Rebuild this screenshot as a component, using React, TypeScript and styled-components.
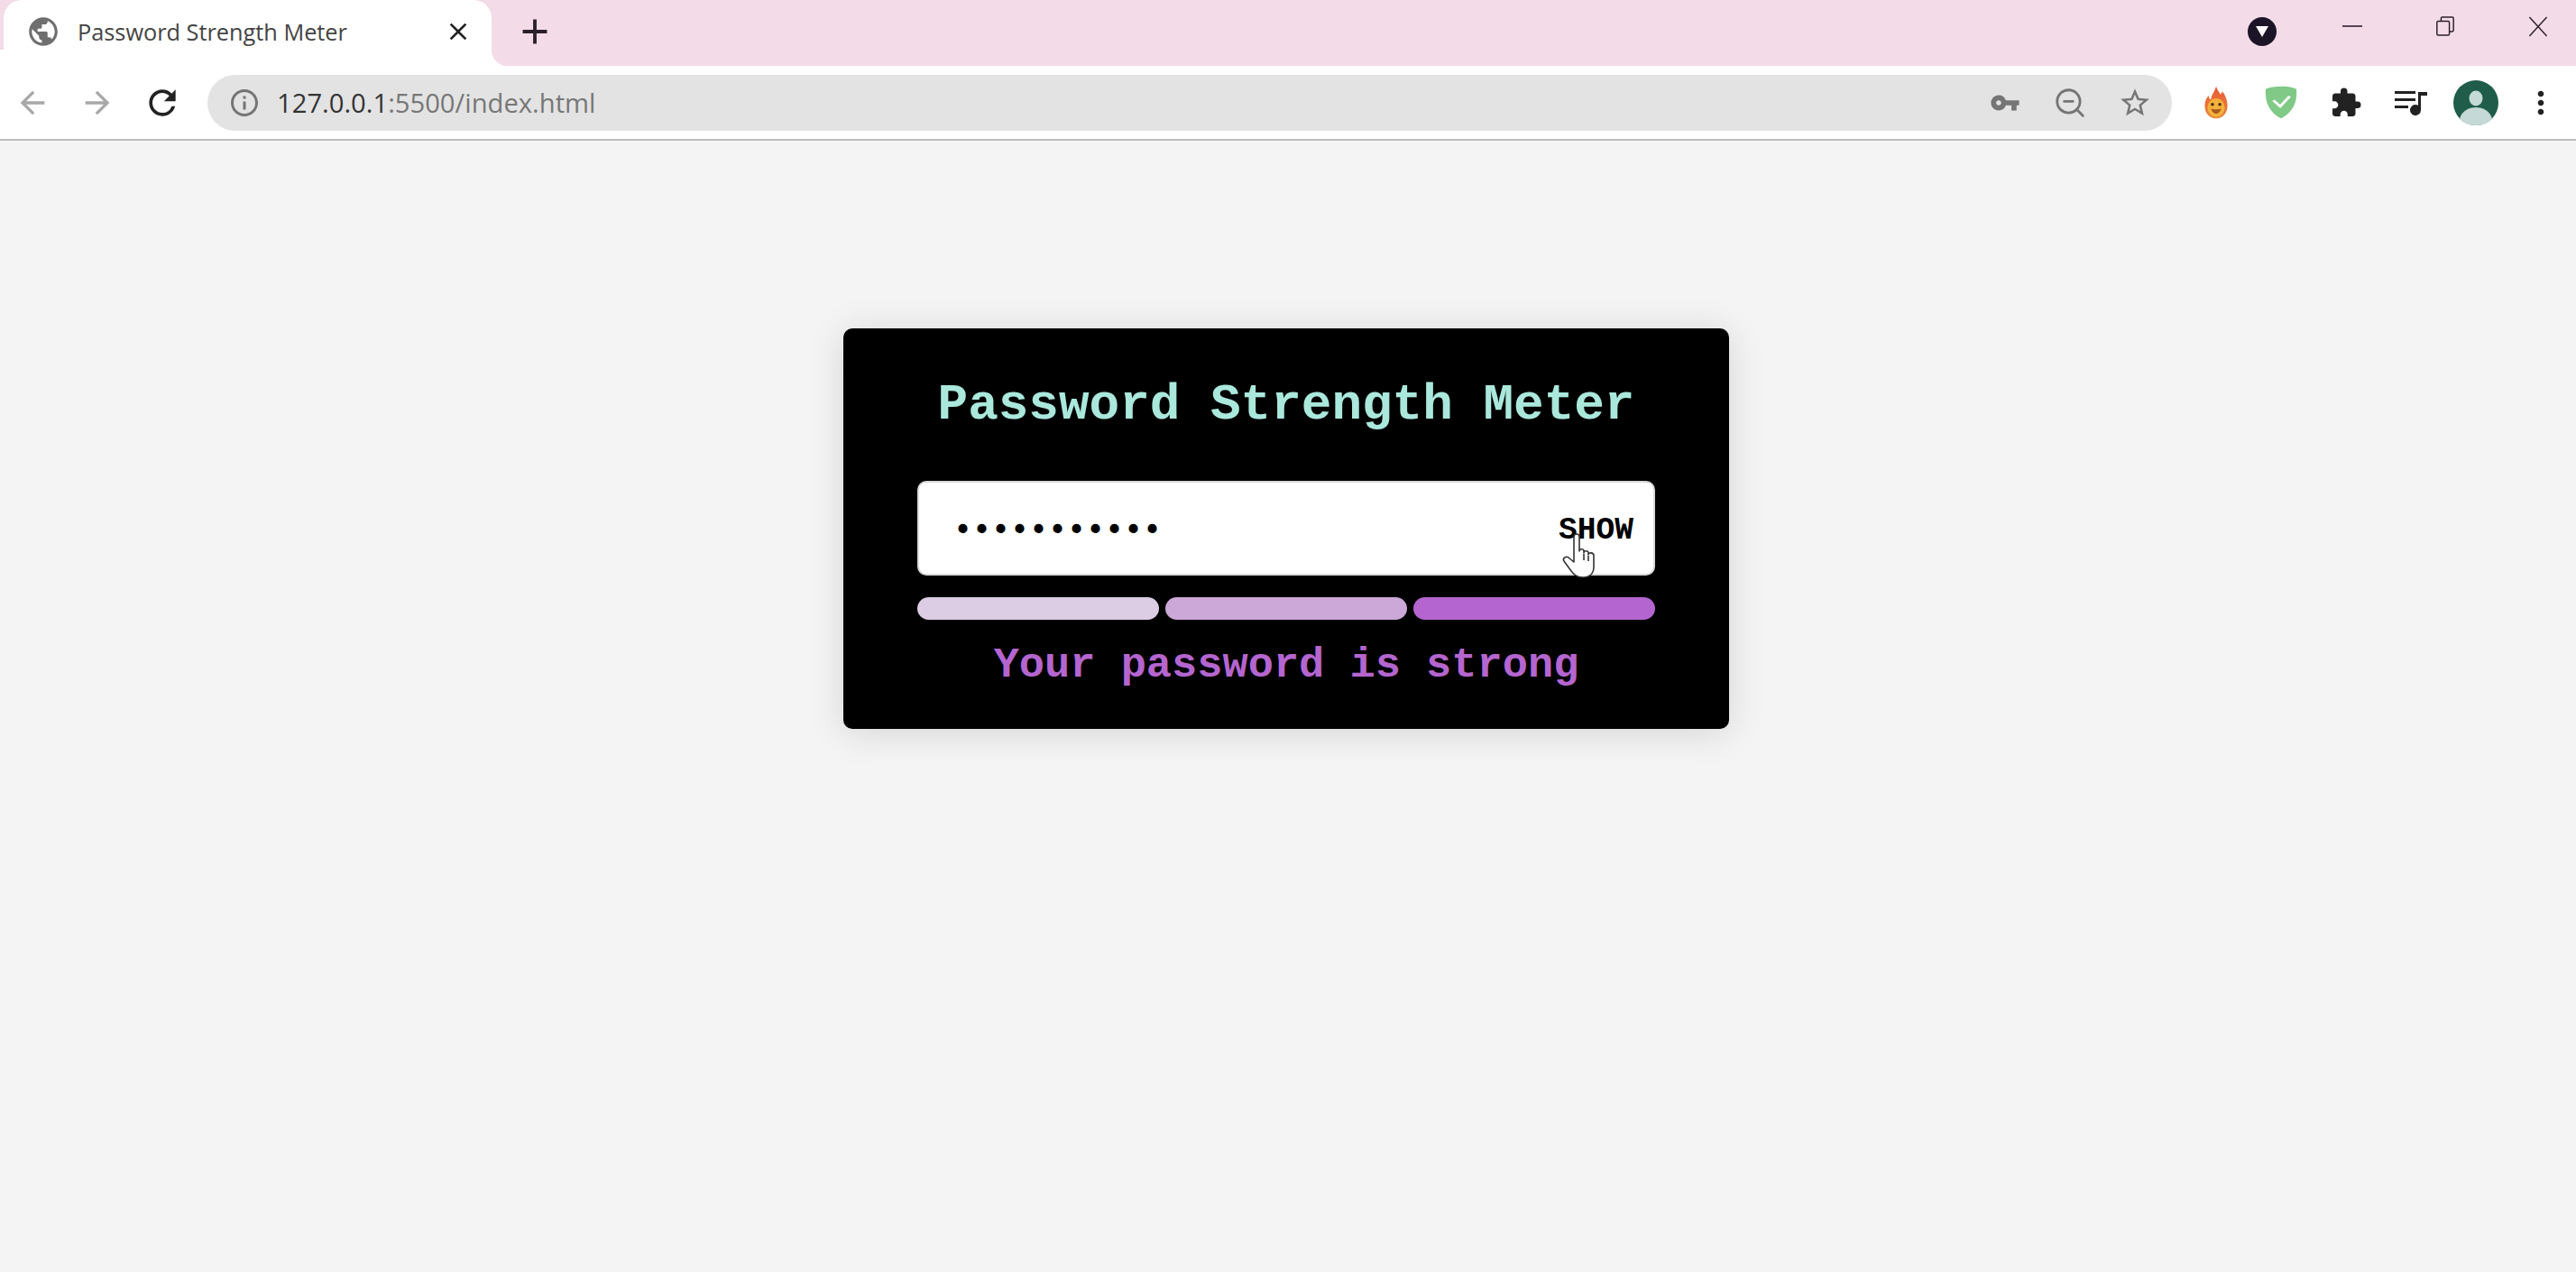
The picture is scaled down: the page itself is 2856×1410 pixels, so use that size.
import React from "react";
import styled, { createGlobalStyle } from "styled-components";
import {
  MdPublic, MdClose, MdAdd, MdArrowBack, MdArrowForward, MdRefresh, MdInfoOutline,
  MdVpnKey, MdStarBorder, MdExtension, MdMoreVert,
} from "react-icons/md";
import { ZoomOut } from "lucide-react";

const Global = createGlobalStyle`
  html, body { margin: 0; padding: 0; background: #f4f4f4; }
  body { width: 2856px; height: 1410px; overflow: hidden; font-family: "Open Sans", sans-serif; }
`;

const Page = styled.div`
  width: 2856px;
  height: 1410px;
  display: flex;
  flex-direction: column;
  background: #f4f4f4;
`;

const TabStrip = styled.header`
  height: 73px;
  flex: none;
  display: flex;
  align-items: center;
  padding-left: 4px;
  background: #f3dbe8;
`;

const Tab = styled.div`
  position: relative;
  align-self: stretch;
  width: 541px;
  display: flex;
  align-items: center;
  gap: 20px;
  padding: 0 21px 3px 28px;
  box-sizing: border-box;
  background: #fff;
  border-radius: 20px 20px 0 0;
  &::after {
    content: "";
    position: absolute;
    left: 100%;
    bottom: 0;
    width: 18px;
    height: 18px;
    background: radial-gradient(circle at top right, transparent 18px, #fff 18.5px);
  }
  &::before {
    content: "";
    position: absolute;
    right: 100%;
    bottom: 0;
    width: 4px;
    height: 18px;
    background: #fff;
  }
`;

const Favicon = styled(MdPublic)`
  flex: none;
  margin: 0 -1px 0 -3px;
  color: #6f6f6f;
`;

const TabTitle = styled.span`
  flex: 1;
  font-size: 25.3px;
  color: #444;
  white-space: nowrap;
`;

const NewTab = styled.div`
  display: flex;
  margin: 0 0 3px 25px;
  color: #2c1f2c;
`;

const Spacer = styled.div`
  flex: 1;
`;

const TabSearch = styled.div`
  width: 32px;
  height: 32px;
  margin-bottom: 3px;
  border-radius: 50%;
  background: #1c1528;
  display: flex;
  align-items: center;
  justify-content: center;
`;

const WindowControls = styled.div`
  display: flex;
  align-items: center;
  gap: 81px;
  margin: 0 31px 15px 73px;
`;

const Toolbar = styled.nav`
  height: 81px;
  flex: none;
  display: flex;
  align-items: center;
  padding-right: 3px;
  background: #fff;
  border-bottom: 2px solid #bdbdbd;
`;

const Slot = styled.div<{ $color?: string }>`
  width: 72px;
  height: 62px;
  flex: none;
  display: flex;
  align-items: center;
  justify-content: center;
  color: ${(p) => p.$color ?? "#222"};
`;

const Omnibox = styled.div`
  flex: 1;
  height: 62px;
  margin: 0 13px 0 14px;
  padding: 0 5px 0 23px;
  display: flex;
  align-items: center;
  background: #e3e3e3;
  border-radius: 31px;
  color: #757575;
`;

const Url = styled.div`
  flex: 1;
  margin-left: 18px;
  font-family: "Open Sans", sans-serif;
  font-size: 29.2px;
  color: #777;
  white-space: nowrap;
`;

const Host = styled.span`
  color: #333;
`;

const Content = styled.main`
  flex: 1;
  display: flex;
  flex-direction: column;
  align-items: center;
  padding: 208px 4px 0 0;
  font-family: "Liberation Mono", "Courier New", monospace;
  font-weight: 700;
`;

const Card = styled.section`
  width: 982px;
  height: 444px;
  box-sizing: border-box;
  padding: 0 82px;
  display: flex;
  flex-direction: column;
  background: #000;
  border-radius: 10px;
  box-shadow: 0 4px 40px rgba(0, 0, 0, 0.13);
`;

const Title = styled.h1`
  margin: 0;
  height: 169px;
  padding-top: 61px;
  box-sizing: border-box;
  font-size: 56px;
  line-height: 48px;
  font-weight: 700;
  text-align: center;
  white-space: nowrap;
  color: #aae8dc;
`;

const Field = styled.div`
  position: relative;
  height: 105px;
  box-sizing: border-box;
  padding: 4px 22px 0 38px;
  display: flex;
  align-items: center;
  justify-content: space-between;
  background: #fff;
  border: 2px solid #d8d8d8;
  border-radius: 10px;
`;

const Dots = styled.span`
  padding-top: 2px;
  font-size: 35px;
  color: #000;
`;

const ShowLabel = styled.span`
  font-size: 34.6px;
  color: #000;
`;

const Meter = styled.div`
  display: grid;
  grid-template-columns: repeat(3, 1fr);
  gap: 7px;
  margin-top: 24px;
`;

const Bar = styled.div<{ $color: string }>`
  height: 25px;
  border-radius: 13px;
  background: ${(p) => p.$color};
`;

const Status = styled.p`
  margin: 26px 0 0;
  font-size: 47px;
  line-height: 50px;
  text-align: center;
  white-space: nowrap;
  color: #b565cf;
`;

const Fire = () => (
  <svg width="30" height="37" viewBox="0 0 36 50">
    <defs>
      <linearGradient id="fl" x1="0" y1="0" x2="0" y2="1">
        <stop offset="0" stopColor="#ea5a34" />
        <stop offset="1" stopColor="#e8843a" />
      </linearGradient>
    </defs>
    <path d="M18 1c2 6 5 8 6 12 2-1 3-3 3-5 5 6 8 14 8 22 0 11-7 19-17 19S1 41 1 30c0-6 2-11 6-15 0 3 1 5 3 6 1-8 6-12 8-20z" fill="url(#fl)" />
    <ellipse cx="18" cy="33" rx="13" ry="14" fill="#f3b03c" />
    <circle cx="12.5" cy="28" r="2.4" fill="#4b2b16" />
    <circle cx="23.5" cy="28" r="2.4" fill="#4b2b16" />
    <path d="M10 34c4 2 12 2 16 0-2 5-5 8-8 8s-6-3-8-8z" fill="#a8571f" />
  </svg>
);

const Shield = () => (
  <svg width="36" height="37" viewBox="0 0 38 50" preserveAspectRatio="none">
    <path d="M19 1c7 0 13 1 18 4 1 18-3 34-18 44C4 39 0 23 1 5c5-3 11-4 18-4z" fill="#80c987" />
    <path d="M10 22l8 9 11-15" fill="none" stroke="#fff" strokeWidth="3.4" />
  </svg>
);

const Queue = () => (
  <svg width="36" height="28" viewBox="0 0 36 28" fill="#222">
    <rect x="0" y="1" width="23" height="3" />
    <rect x="0" y="9" width="23" height="3" />
    <rect x="0" y="17" width="15" height="3" />
    <path d="M26 2h10v4h-7v16a6 6 0 1 1-3-5.2z" />
  </svg>
);

const Avatar = () => (
  <svg width="50" height="50" viewBox="0 0 50 50">
    <circle cx="25" cy="25" r="25" fill="#1f5c4a" />
    <ellipse cx="25" cy="20" rx="7.5" ry="8.5" fill="#c5d9d6" />
    <path d="M7 43c2-9 10-13 18-13s16 4 18 13c-5 5-11 7-18 7S12 48 7 43z" fill="#c5d9d6" />
  </svg>
);

const HandSvg = ({ className }: { className?: string }) => (
  <svg className={className} width="42" height="54" viewBox="0 0 42 52" fill="#fff" stroke="#333" strokeWidth="1.6" strokeLinejoin="round">
    <path d="M14 5c0-4 6-4 6 0v16c0-3 5-3 5 0v2c0-3 5-3 5 0v2c0-3 6-3 6 1v12c0 6-3 12-12 12-7 0-10-3-13-7L3 32c-2-3 2-6 5-4l6 5z" />
    <path d="M25 24v7M30 26v6" fill="none" />
  </svg>
);

const Hand = styled(HandSvg)`
  position: absolute;
  left: 712px;
  top: 54px;
`;

const MinIcon = () => (
  <svg width="22" height="22" viewBox="0 0 22 22" stroke="#2c1f2c" strokeWidth="1.6" fill="none">
    <path d="M0 11h22" />
  </svg>
);

const RestoreIcon = () => (
  <svg width="22" height="22" viewBox="0 0 22 24" stroke="#2c1f2c" strokeWidth="1.6" fill="none">
    <rect x="1" y="6" width="15" height="17" rx="1.5" />
    <path d="M6 6V2.5C6 1.6 6.6 1 7.5 1H19.5c.9 0 1.5.6 1.5 1.5V17c0 .9-.6 1.5-1.5 1.5H16" />
  </svg>
);

const CloseIcon = () => (
  <svg width="22" height="23" viewBox="0 0 22 24" stroke="#2c1f2c" strokeWidth="1.5" fill="none">
    <path d="M1 1l20 22M21 1L1 23" />
  </svg>
);

export default function App() {
  return (
    <Page>
      <Global />
      <TabStrip>
        <Tab>
          <Favicon size={38} />
          <TabTitle>Password Strength Meter</TabTitle>
          <MdClose size={32} color="#222" />
        </Tab>
        <NewTab>
          <MdAdd size={46} />
        </NewTab>
        <Spacer />
        <TabSearch>
          <svg width="16" height="14" viewBox="0 0 16 14"><path d="M1 1h14L8 13z" fill="#fff" /></svg>
        </TabSearch>
        <WindowControls>
          <MinIcon />
          <RestoreIcon />
          <CloseIcon />
        </WindowControls>
      </TabStrip>
      <Toolbar>
        <Slot $color="#a8a8a8"><MdArrowBack size={40} /></Slot>
        <Slot $color="#a8a8a8"><MdArrowForward size={40} /></Slot>
        <Slot><MdRefresh size={44} /></Slot>
        <Omnibox>
          <MdInfoOutline size={36} />
          <Url><Host>127.0.0.1</Host>:5500/index.html</Url>
          <Slot $color="#757575"><MdVpnKey size={34} /></Slot>
          <Slot $color="#757575"><ZoomOut size={38} strokeWidth={1.8} /></Slot>
          <Slot $color="#757575"><MdStarBorder size={38} /></Slot>
        </Omnibox>
        <Slot><Fire /></Slot>
        <Slot><Shield /></Slot>
        <Slot><MdExtension size={36} /></Slot>
        <Slot><Queue /></Slot>
        <Slot><Avatar /></Slot>
        <Slot><MdMoreVert size={40} /></Slot>
      </Toolbar>
      <Content>
        <Card>
          <Title>Password Strength Meter</Title>
          <Field>
            <Dots>•••••••••••</Dots>
            <ShowLabel>SHOW</ShowLabel>
            <Hand />
          </Field>
          <Meter>
            <Bar $color="#dccce4" />
            <Bar $color="#cba8d8" />
            <Bar $color="#b565d0" />
          </Meter>
          <Status>Your password is strong</Status>
        </Card>
      </Content>
    </Page>
  );
}
